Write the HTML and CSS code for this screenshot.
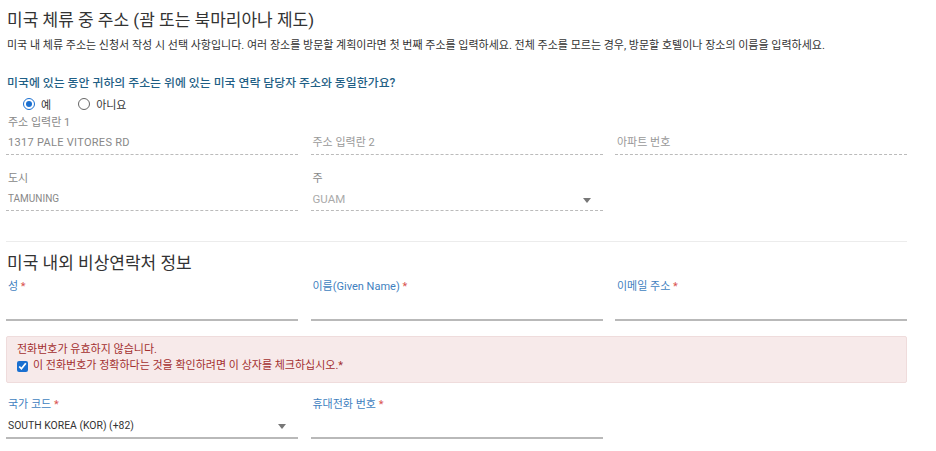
FILE: index.html
```html
<!DOCTYPE html>
<html lang="ko">
<head>
<meta charset="utf-8">
<link rel="stylesheet" href="styles.css">
</head>
<body>
<div class="page">
  <h1 class="title">미국 체류 중 주소 (괌 또는 북마리아나 제도)</h1>
  <p class="desc">미국 내 체류 주소는 신청서 작성 시 선택 사항입니다. 여러 장소를 방문할 계획이라면 첫 번째 주소를 입력하세요. 전체 주소를 모르는 경우, 방문할 호텔이나 장소의 이름을 입력하세요.</p>
  <p class="question">미국에 있는 동안 귀하의 주소는 위에 있는 미국 연락 담당자 주소와 동일한가요?</p>
  <div class="radios">
    <span class="radio checked"></span><span class="radio-text">예</span>
    <span class="radio"></span><span class="radio-text">아니요</span>
  </div>
  <div class="grid row1">
    <div class="cell">
      <div class="label gray">주소 입력란 1</div>
      <div class="field dashed"><span class="val wide">1317 PALE VITORES RD</span></div>
    </div>
    <div class="cell">
      <div class="label"></div>
      <div class="field dashed"><span class="ph">주소 입력란 2</span></div>
    </div>
    <div class="cell">
      <div class="label"></div>
      <div class="field dashed"><span class="ph">아파트 번호</span></div>
    </div>
  </div>
  <div class="grid row2">
    <div class="cell">
      <div class="label gray">도시</div>
      <div class="field dashed"><span class="val">TAMUNING</span></div>
    </div>
    <div class="cell">
      <div class="label gray">주</div>
      <div class="field dashed select"><span class="val light">GUAM</span><span class="arrow"></span></div>
    </div>
  </div>
  <hr class="sep">
  <h2 class="section">미국 내외 비상연락처 정보</h2>
  <div class="grid row3">
    <div class="cell">
      <div class="label blue">성 <span class="req">*</span></div>
      <div class="field solid"></div>
    </div>
    <div class="cell">
      <div class="label blue">이름(Given Name) <span class="req">*</span></div>
      <div class="field solid"></div>
    </div>
    <div class="cell">
      <div class="label blue">이메일 주소 <span class="req">*</span></div>
      <div class="field solid"></div>
    </div>
  </div>
  <div class="alert">
    <div class="alert-line">전화번호가 유효하지 않습니다.</div>
    <label class="alert-line check"><input type="checkbox" checked> 이 전화번호가 정확하다는 것을 확인하려면 이 상자를 체크하십시오.*</label>
  </div>
  <div class="grid row4">
    <div class="cell">
      <div class="label blue">국가 코드 <span class="req">*</span></div>
      <div class="field solid2 select"><span class="val dark">SOUTH KOREA (KOR) (+82)</span><span class="arrow"></span></div>
    </div>
    <div class="cell">
      <div class="label blue">휴대전화 번호 <span class="req">*</span></div>
      <div class="field solid2"></div>
    </div>
  </div>
</div>
</body>
</html>
```
FILE: styles.css
```css
html, body {
  margin: 0;
  padding: 0;
  background: #fff;
}
body {
  font-family: Roboto, "Noto Sans CJK KR", sans-serif;
  color: #333;
}
.page {
  width: 901px;
  padding: 8px 0 0 6px;
}
.title {
  margin: 0;
  font-size: 17px;
  line-height: 24px;
  font-weight: 400;
  color: #333;
  padding-left: 1px;
}
.desc {
  margin: 6px 0 0;
  font-size: 11px;
  line-height: 16px;
  color: #333;
  padding-left: 1px;
  white-space: nowrap;
}
.question {
  margin: 21px 0 0;
  font-size: 11.9px;
  line-height: 16px;
  color: #1f5f86;
  font-weight: 500;
  padding-left: 1px;
  white-space: nowrap;
}
.radios {
  margin-top: 5px;
  height: 16px;
  display: flex;
  align-items: center;
  padding-left: 17px;
  font-size: 11px;
  color: #333;
}
.radio {
  width: 10px;
  height: 10px;
  border: 1.5px solid #666;
  border-radius: 50%;
  display: inline-flex;
  align-items: center;
  justify-content: center;
  box-sizing: content-box;
}
.radio.checked {
  border-color: #1a6fd0;
}
.radio.checked::after {
  content: "";
  width: 6px;
  height: 6px;
  border-radius: 50%;
  background: #1a6fd0;
}
.radio-text {
  margin-left: 6px;
  margin-right: 27px;
}
.grid {
  display: grid;
  grid-template-columns: 292px 292px 292px;
  column-gap: 12.5px;
}
.row1 {
  margin-top: 3px;
}
.row2 {
  margin-top: 16px;
}
.label {
  height: 16px;
  font-size: 11px;
  line-height: 16px;
  padding-left: 2px;
  white-space: nowrap;
}
.label.gray {
  color: #888;
}
.label.blue {
  color: #3f7fc0;
}
.req {
  color: #d9534f;
}
.field {
  position: relative;
  font-size: 10px;
  line-height: 16px;
  padding: 4px 2px 3px;
  height: 16px;
}
.field.dashed {
  border-bottom: 1px dashed #bbb;
}
.field.solid {
  height: 24px;
  padding: 0;
  border-bottom: 2px solid #b9b9b9;
}
.field.solid2 {
  padding: 5px 2px 3px;
  border-bottom: 2px solid #b9b9b9;
}
.val {
  color: #888;
}
.val.wide {
  font-size: 11px;
  letter-spacing: 0.3px;
}
.val.light {
  color: #aaa;
  font-size: 11.5px;
}
.val.dark {
  color: #333;
  font-size: 10.4px;
}
.ph {
  color: #999;
  font-size: 11px;
}
.arrow {
  position: absolute;
  right: 12px;
  top: 11px;
  width: 0;
  height: 0;
  border-left: 4.5px solid transparent;
  border-right: 4.5px solid transparent;
  border-top: 5px solid #777;
}
.sep {
  margin: 30px 0 0;
  border: 0;
  border-top: 1px solid #ececec;
  height: 0;
}
.section {
  margin: 10px 0 0;
  font-size: 17px;
  line-height: 22px;
  font-weight: 400;
  color: #333;
  padding-left: 1px;
}
.row3 {
  margin-top: 5px;
}
.alert {
  margin-top: 15px;
  background: #f7eaea;
  border: 1px solid #efdcdc;
  border-radius: 2px;
  padding: 5px 10px 8px;
  color: #a32f2f;
  font-size: 11px;
}
.alert-line {
  display: flex;
  align-items: center;
  height: 16px;
  line-height: 16px;
}
.check input {
  margin: 0 5px 0 0;
  width: 11px;
  height: 11px;
  accent-color: #1a6fd0;
}
.row4 {
  margin-top: 14px;
}
```
